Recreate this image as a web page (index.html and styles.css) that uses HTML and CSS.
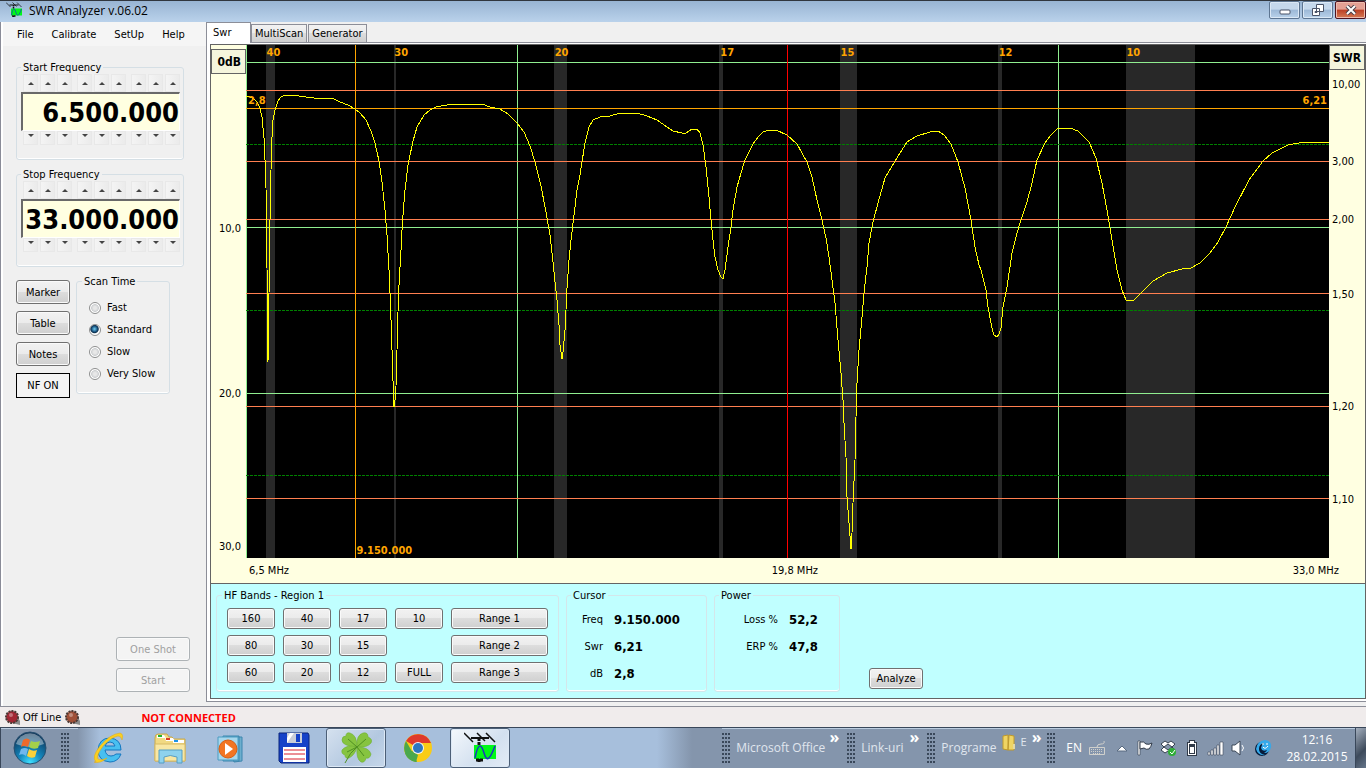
FILE: index.html
```html
<!DOCTYPE html>
<html lang="en">
<head>
    <meta charset="UTF-8">
    <meta name="viewport" content="width=device-width, initial-scale=1.0">
    <title>SWR Analyzer v.06.02</title>
    <link rel="stylesheet" href="styles.css">
</head>
<body>
    <svg class="defs" width="0" height="0" aria-hidden="true">
        <symbol id="antenna" viewBox="0 0 32 32">
            <path d="M10 13h22v14H10z" fill="#00f818"/>
            <path d="M11 26c3-15 6-15 9-5s6 6 11-7" fill="none" stroke="#1838c0" stroke-width="1.5"/>
            <path d="M7 6h18" fill="none" stroke="#111" stroke-width="2"/>
            <path d="M0 1l9 9M13 1l8 8M22 1l9 9" fill="none" stroke="#111" stroke-width="1.5"/>
            <path d="M15 6v8M15 27v4M12 28h7" stroke="#111" stroke-width="3" stroke-dasharray="3 1"/>
        </symbol>
        <symbol id="led" viewBox="0 0 16 16">
            <path d="M11 4l4 7v4l-8-2z" fill="#8a8a8a"/>
            <circle cx="7" cy="7" r="6" fill="currentColor" stroke="#4a3a36" stroke-width="2" stroke-dasharray="2 1"/>
            <circle cx="6" cy="5" r="2" fill="#fff" opacity=".35"/>
        </symbol>
    </svg>

    <header class="titlebar">
        <svg class="title-icon" width="16" height="16"><use href="#antenna"/></svg>
        <h1 class="title">SWR Analyzer v.06.02</h1>
        <div class="window-buttons">
            <button class="win-btn" aria-label="Minimize">
                <svg width="12" height="12" viewBox="0 0 12 12"><rect x="1" y="6" width="10" height="4" rx="1" fill="#fff" stroke="#4b5468"/></svg>
            </button>
            <button class="win-btn" aria-label="Restore">
                <svg width="12" height="12" viewBox="0 0 12 12"><path d="M4.5 .5h7v7h-7zM.5 4.5h7v7h-7z" fill="#fff" stroke="#4b5468"/><path d="M3 7.5h2v1H3z" fill="#4b5468" stroke="#4b5468"/></svg>
            </button>
            <button class="win-btn close" aria-label="Close">
                <svg width="12" height="10" viewBox="0 0 12 10"><path d="M2 1l8 8M10 1L2 9" stroke="#4b4048" stroke-width="4"/><path d="M2 1l8 8M10 1L2 9" stroke="#fff" stroke-width="2"/></svg>
            </button>
        </div>
    </header>

    <div class="window">
        <aside class="sidebar">
            <nav class="menu">
                <button class="menu-item">File</button>
                <button class="menu-item">Calibrate</button>
                <button class="menu-item">SetUp</button>
                <button class="menu-item">Help</button>
            </nav>

            <div class="controls">
                <fieldset class="group freq">
                    <legend>Start Frequency</legend>
                    <div class="spins up">
                        <div><button aria-label="Up"></button><button aria-label="Up"></button><button aria-label="Up"></button></div>
                        <div><button aria-label="Up"></button><button aria-label="Up"></button><button aria-label="Up"></button></div>
                        <div><button aria-label="Up"></button><button aria-label="Up"></button><button aria-label="Up"></button></div>
                    </div>
                    <input class="freq-value" type="text" value="6.500.000" aria-label="Start Frequency">
                    <div class="spins down">
                        <div><button aria-label="Down"></button><button aria-label="Down"></button><button aria-label="Down"></button></div>
                        <div><button aria-label="Down"></button><button aria-label="Down"></button><button aria-label="Down"></button></div>
                        <div><button aria-label="Down"></button><button aria-label="Down"></button><button aria-label="Down"></button></div>
                    </div>
                </fieldset>

                <fieldset class="group freq">
                    <legend>Stop Frequency</legend>
                    <div class="spins up">
                        <div><button aria-label="Up"></button><button aria-label="Up"></button><button aria-label="Up"></button></div>
                        <div><button aria-label="Up"></button><button aria-label="Up"></button><button aria-label="Up"></button></div>
                        <div><button aria-label="Up"></button><button aria-label="Up"></button><button aria-label="Up"></button></div>
                    </div>
                    <input class="freq-value" type="text" value="33.000.000" aria-label="Stop Frequency">
                    <div class="spins down">
                        <div><button aria-label="Down"></button><button aria-label="Down"></button><button aria-label="Down"></button></div>
                        <div><button aria-label="Down"></button><button aria-label="Down"></button><button aria-label="Down"></button></div>
                        <div><button aria-label="Down"></button><button aria-label="Down"></button><button aria-label="Down"></button></div>
                    </div>
                </fieldset>

                <div class="tools">
                    <div class="tool-buttons">
                        <button class="btn">Marker</button>
                        <button class="btn">Table</button>
                        <button class="btn">Notes</button>
                        <button class="nf">NF ON</button>
                    </div>
                    <fieldset class="group scan">
                        <legend>Scan Time</legend>
                        <label><input type="radio" name="scan">Fast</label>
                        <label><input type="radio" name="scan" checked>Standard</label>
                        <label><input type="radio" name="scan">Slow</label>
                        <label><input type="radio" name="scan">Very Slow</label>
                    </fieldset>
                </div>

                <div class="run">
                    <button class="btn" disabled>One Shot</button>
                    <button class="btn" disabled>Start</button>
                </div>
            </div>
        </aside>

        <main class="workspace">
            <div class="tabs" role="tablist">
                <button class="tab active" role="tab" aria-selected="true">Swr</button>
                <button class="tab" role="tab">MultiScan</button>
                <button class="tab" role="tab">Generator</button>
            </div>

            <div class="page">
                <div class="panel">
                    <section class="chart">
                        <div class="axis axis-db">
                            <span class="axis-head">0dB</span>
                            <span class="tick" style="top: 35.7%">10,0</span>
                            <span class="tick" style="top: 67.8%">20,0</span>
                            <span class="tick" style="top: 97.7%">30,0</span>
                        </div>

                        <div class="plot">
                            <svg class="plot-svg" viewBox="246 45 1083 513" preserveAspectRatio="none" shape-rendering="crispEdges">
                                <g class="bands">
                                    <path d="M266 45h9v513h-9zM394 45h2v513h-2zM554 45h13v513h-13zM719 45h4v513h-4zM840 45h17v513h-17zM998 45h4v513h-4zM1126 45h69v513h-69z"/>
                                </g>
                                <path class="grid-db" d="M246 62.5h1083M246 227.5h1083M246 393.5h1083M246.5 45v513M517.5 45v513M1058.5 45v513"/>
                                <path class="grid-half" d="M246 144.5h1083M246 310.5h1083M246 475.5h1083"/>
                                <path class="grid-swr" d="M246 90.5h1083M246 161.5h1083M246 219.5h1083M246 293.5h1083M246 406.5h1083M246 498.5h1083"/>
                                <path class="center" d="M787.5 45v513"/>
                                <path class="cursor" d="M246 108.5h1083M355.5 45v513"/>
                                <polyline class="trace" points="246,96 250,97 254,99 257,102 260,108 262,117 264,138 265,160 266,188 267,268 268,362 269,294 270,220 271,170 272,137 273,120 275,110 278,101 281,97 285,95 297,95 299,96 306,97 314,98 334,99 340,102 348,105 355,109 360,113 366,120 371,131 375,143 379,161 382,182 385,210 387,235 388,253 389,270 390,293 391,320 392,350 393,381 394,407 395,400 396,386 397,350 398,312 399,285 401,250 402,230 403,215 405,190 408,165 413,141 417,127 424,115 430,110 436,107 447,105 472,104 482,104 490,107 500,109 508,114 517,123 524,132 530,146 535,162 541,186 546,212 550,235 553,262 555,282 557,300 559,325 560,345 562,359 563,352 565,330 566,310 567,288 569,260 571,240 574,215 577,190 580,175 582,162 585,143 589,127 593,120 600,117 610,116 613,115 621,113 637,113 647,116 657,120 667,127 673,131 682,133 686,133 692,129 697,129 700,133 703,145 706,167 709,197 711,220 713,240 715,257 718,270 721,277 723,279 725,270 728,247 731,227 733,210 737,187 741,173 745,160 753,144 758,137 763,132 769,130 776,130 787,135 797,144 802,153 807,162 812,177 817,200 822,220 826,238 829,257 832,280 835,303 838,340 841,373 843,400 844,423 846,457 847,497 849,523 851,549 852,533 853,503 855,460 856,417 857,383 859,350 862,317 864,293 867,267 869,243 873,222 878,203 885,178 895,161 907,142 917,136 930,132 938,131 944,135 951,144 958,162 965,188 971,220 975,247 979,265 981,270 986,290 988,307 992,328 994,335 997,337 999,334 1001,328 1003,307 1007,287 1012,253 1017,233 1021,220 1027,202 1032,183 1037,160 1045,143 1051,135 1058,128 1070,128 1078,131 1089,142 1096,158 1102,183 1107,210 1112,240 1117,270 1122,290 1126,300 1130,301 1134,300 1142,292 1153,281 1167,273 1182,269 1191,268 1200,263 1210,253 1218,242 1226,227 1235,207 1249,180 1263,161 1272,153 1282,148 1288,145 1299,143 1301,142 1303,143 1317,142 1329,142"/>
                            </svg>
                            <span class="band" style="left: 1.9%">40</span>
                            <span class="band" style="left: 13.7%">30</span>
                            <span class="band" style="left: 28.5%">20</span>
                            <span class="band" style="left: 43.8%">17</span>
                            <span class="band" style="left: 54.9%">15</span>
                            <span class="band" style="left: 69.5%">12</span>
                            <span class="band" style="left: 81.3%">10</span>
                            <span class="mark mark-db">2,8</span>
                            <span class="mark mark-swr">6,21</span>
                            <span class="mark mark-freq">9.150.000</span>
                        </div>

                        <div class="axis axis-swr">
                            <span class="axis-head">SWR</span>
                            <span class="tick" style="top: 7.6%">10,00</span>
                            <span class="tick" style="top: 22.7%">3,00</span>
                            <span class="tick" style="top: 34%">2,00</span>
                            <span class="tick" style="top: 48.6%">1,50</span>
                            <span class="tick" style="top: 70.4%">1,20</span>
                            <span class="tick" style="top: 88.5%">1,10</span>
                        </div>

                        <div class="axis-mhz">
                            <span>6,5 MHz</span>
                            <span class="mid">19,8 MHz</span>
                            <span>33,0 MHz</span>
                        </div>
                    </section>

                    <section class="readout">
                        <fieldset class="group bands-box">
                            <legend>HF Bands - Region 1</legend>
                            <div class="band-grid">
                                <button class="btn">160</button>
                                <button class="btn">40</button>
                                <button class="btn">17</button>
                                <button class="btn">10</button>
                                <button class="btn">Range 1</button>
                                <button class="btn">80</button>
                                <button class="btn">30</button>
                                <button class="btn">15</button>
                                <button class="btn range">Range 2</button>
                                <button class="btn">60</button>
                                <button class="btn">20</button>
                                <button class="btn">12</button>
                                <button class="btn">FULL</button>
                                <button class="btn">Range 3</button>
                            </div>
                        </fieldset>

                        <fieldset class="group cursor-box">
                            <legend>Cursor</legend>
                            <dl class="values">
                                <dt>Freq</dt><dd>9.150.000</dd>
                                <dt>Swr</dt><dd>6,21</dd>
                                <dt>dB</dt><dd>2,8</dd>
                            </dl>
                        </fieldset>

                        <fieldset class="group power-box">
                            <legend>Power</legend>
                            <dl class="values">
                                <dt>Loss %</dt><dd>52,2</dd>
                                <dt>ERP %</dt><dd>47,8</dd>
                            </dl>
                        </fieldset>

                        <button class="btn analyze">Analyze</button>
                    </section>
                </div>
            </div>
        </main>
    </div>

    <div class="statusbar">
        <svg class="led red" width="16" height="16"><use href="#led"/></svg>
        <span>Off Line</span>
        <svg class="led brown" width="16" height="16"><use href="#led"/></svg>
        <strong class="not-connected">NOT CONNECTED</strong>
    </div>

    <footer class="taskbar">
        <div class="start-area">
            <button class="orb" aria-label="Start menu">
                <svg width="34" height="34" viewBox="0 0 34 34">
                    <defs>
                        <radialGradient id="orbFill" cx=".5" cy=".95" r=".9"><stop offset="0" stop-color="#3fe0ff"/><stop offset=".4" stop-color="#1487bd"/><stop offset="1" stop-color="#0d3457"/></radialGradient>
                    </defs>
                    <circle cx="17" cy="17" r="16" fill="url(#orbFill)" stroke="#274f70"/>
                    <path d="M3 13a14.5 14.5 0 0 1 28 0q-14 6-28 0z" fill="#fff" opacity=".4"/>
                    <path d="M10 9q4-3 7 0l-2 7q-4-2-7 0z" fill="#ee6a2c"/>
                    <path d="M18 10q4 2 9 0l-2 7q-5 2-9-1z" fill="#a4d04a"/>
                    <path d="M8 18q4-2 7 0l-2 7q-3-3-7-1z" fill="#6fb7ee"/>
                    <path d="M16 18q4 3 8 1l-2 7q-4 2-8-1z" fill="#fbd13b"/>
                </svg>
            </button>
            <span class="grip"></span>
        </div>

        <div class="apps">
            <button class="app" aria-label="Internet Explorer">
                <svg width="32" height="32" viewBox="0 0 32 32">
                    <path d="M29 18H13q1 6 6 6 3 0 5-2h5q-3 8-11 8Q6 29 6 18 7 6 18 6q11 1 11 12zM13 14h10q-1-4-5-4t-5 4z" fill="#48bff0" stroke="#1477c0"/>
                    <path d="M4 30q-5-5 4-16Q18 2 28 1q4 1 2 7-1-4-4-4-6 1-14 9-8 10-6 14 3 2 9-1-7 6-13 4z" fill="#f9cf20" stroke="#e0a812" stroke-width=".5"/>
                </svg>
            </button>
            <button class="app" aria-label="Explorer">
                <svg width="32" height="32" viewBox="0 0 32 32">
                    <path d="M1 29V6q0-4 3-4h9l2 3h3l2 2h11v22z" fill="#f1d982" stroke="#c8a84c"/>
                    <path d="M3 3h7l2 3H3zM11 6h8l2 3h-9zM19 8h11v3H19z" fill="#fff"/>
                    <path d="M4 3h4v2H4z" fill="#22b531"/><path d="M12 6h4v2h-4z" fill="#dc3a28"/><path d="M20 8h4v2h-4z" fill="#1e94e6"/>
                    <path d="M1 12h30v17H1z" fill="#f8e7a4" stroke="#d7ba64"/>
                    <path d="M5 31V18h23v13h-5v-6q-7-3-13 0v6z" fill="#8ed2ed" stroke="#559ec4"/>
                </svg>
            </button>
            <button class="app" aria-label="Media Player">
                <svg width="32" height="32" viewBox="0 0 32 32">
                    <path d="M10 5h16v24l-8 1zM7 4h16v25H7z" fill="#6daecd" stroke="#3d86ae"/>
                    <path d="M2 5h20v23H2z" fill="#a7d7ec" stroke="#4b9cc2"/>
                    <circle cx="12" cy="17" r="9" fill="#f27522" stroke="#d85e12"/>
                    <path d="M9 11l8 6-8 6z" fill="#fff"/>
                </svg>
            </button>
            <button class="app" aria-label="Total Commander">
                <svg width="32" height="32" viewBox="0 0 32 32">
                    <path d="M1 1h29l1 2v28H3l-2-2z" fill="#1642c8" stroke="#0a257b"/>
                    <path d="M9 1h15v10H9z" fill="#c9ced8"/><path d="M9 11L16 1h-4l-3 5z" fill="#fff"/><path d="M18 2h4v8h-4z" fill="#1642c8"/>
                    <path d="M5 15h23v15H5z" fill="#fff"/>
                    <path d="M6 18h21M6 22h21M6 27h21" stroke="#d81e2c"/>
                </svg>
            </button>
            <button class="app running" aria-label="Clover">
                <svg width="32" height="32" viewBox="0 0 32 32">
                    <g fill="#86c440" stroke="#6fb032" stroke-width=".6">
                        <path d="M17 15Q2 14 2 8q0-4 4-4 0-4 4-3 7 2 7 14z"/>
                        <path d="M17 15Q16 3 23 1q5-1 5 4 5 2 3 6-4 5-14 4z"/>
                        <path d="M17 15q12 0 14 7-1 5-5 4-1 5-5 4-5-3-4-15z"/>
                        <path d="M17 15Q7 12 2 18q-1 4 3 5 0 4 4 3 6-3 8-11z"/>
                    </g>
                    <path d="M17 15Q10 20 5 31M17 15L8 7M17 15l9-8M17 15l7 9M17 15l-10 5" fill="none" stroke="#4f8f22"/>
                </svg>
            </button>
            <button class="app" aria-label="Chrome">
                <svg width="30" height="30" viewBox="0 0 30 30">
                    <circle cx="15" cy="15" r="14" fill="#f9cc16"/>
                    <path d="M15 15L3 8a14 14 0 0 1 25 2H15z" fill="#df3a2c"/>
                    <path d="M3 8l8 14 3 7A14 14 0 0 1 3 8z" fill="#4aa84c"/>
                    <path d="M9 18l6 4-2 7q-8-1-11-9z" fill="#4aa84c"/>
                    <circle cx="15" cy="15" r="6" fill="#eef4fa"/><circle cx="15" cy="15" r="5" fill="#2d77c0"/>
                </svg>
            </button>
            <button class="app running current" aria-label="SWR Analyzer">
                <svg width="32" height="32"><use href="#antenna"/></svg>
            </button>
        </div>

        <div class="toolbars">
            <span class="grip"></span>
            <div class="toolbar office"><a href="#">Microsoft Office</a><span class="more">»</span></div>
            <span class="grip"></span>
            <div class="toolbar links"><a href="#">Link-uri</a><span class="more">»</span></div>
            <span class="grip"></span>
            <div class="toolbar programs">
                <a href="#">Programe</a>
                <svg class="folder" width="14" height="18" viewBox="0 0 14 18"><path d="M1 2l5-1v15l-5-1zM7 1l5 1v14H6z" fill="#efd464" stroke="#c09a2c"/><path d="M11 10h2v5h-2z" fill="#e5d8a0"/></svg>
                <span class="item">E</span>
                <span class="more">»</span>
            </div>
            <span class="grip"></span>
        </div>

        <div class="tray">
            <span class="lang">EN</span>
            <svg class="kbd" width="16" height="16" viewBox="0 0 16 16"><path d="M.5 7.5h15v7H.5zM8 7q0-3 4-3t3-3" fill="none" stroke="#d0d0cc"/><path d="M2 9.5h12M2 11.5h12M4 13.5h8" stroke="#d0d0cc" stroke-dasharray="1 1"/></svg>
            <svg width="16" height="16" viewBox="0 0 16 16"><path d="M3 11l5-5 5 5z" fill="#fff" stroke="#596a80"/></svg>
            <svg width="16" height="16" viewBox="0 0 16 16"><path d="M1 1h2v14H1z" fill="#fff" stroke="#303a48" stroke-width=".6"/><path d="M3 2q4-1 6 2 3 1 6-1-1 4-3 6-3 1-5-1l-4 1z" fill="#fff" stroke="#303a48"/></svg>
            <svg width="17" height="17" viewBox="0 0 17 17"><path d="M5 1l3 2 3-2 4 3-3 3 3 3-4 3-3-2-3 2-4-3 3-3-3-3zM4 7l4 3 4-3-4-3z" fill="#fff" stroke="#384250"/><circle cx="12" cy="12" r="4" fill="#2eae35"/><path d="M10 12l2 2 3-4" fill="none" stroke="#fff"/></svg>
            <svg width="16" height="16" viewBox="0 0 16 16"><path d="M5 0h6v2h2v14H3V2h2z" fill="#303a48"/><path d="M6 1h4v2h2v12H4V3h2z" fill="#fff"/><path d="M5 4h6v10H5z" fill="#303a48"/><path d="M6 7h4v6H6z" fill="#fff"/></svg>
            <svg width="17" height="16" viewBox="0 0 17 16"><path d="M1 12h2v3H1zM4 10h2v5H4zM7 8h2v7H7zM10 5h2v10h-2zM13 2h3v13h-3z" fill="#fff" stroke="#3c4858" stroke-width=".6"/></svg>
            <svg width="16" height="16" viewBox="0 0 16 16"><path d="M1 5h3l5-4v14l-5-4H1z" fill="#fff" stroke="#3b4757"/><path d="M11 5q3 3 0 6" fill="none" stroke="#fff"/></svg>
            <svg width="18" height="18" viewBox="0 0 18 18"><circle cx="8" cy="10" r="7" fill="#061b39"/><path d="M2 10Q3 2 11 1q7 1 6 7-1 6-7 6 3-2 3-3-5 2-6-2 0-3 3-5-5 1-5 6 0 5 6 6-7 1-9-6z" fill="#35a9ea"/><path d="M9 8q2 3 5-1M9 4v2M13 4v2" fill="none" stroke="#fff"/></svg>
            <div class="clock"><time>12:16</time><time>28.02.2015</time></div>
        </div>
        <button class="show-desktop" aria-label="Show desktop"></button>
    </footer>
</body>
</html>
```

FILE: styles.css
```css
* {
    box-sizing: border-box;
}

body {
    display: flex;
    flex-direction: column;
    height: 100vh;
    margin: 0;
    overflow: hidden;
    background: #f0f0f0;
    color: #000;
    font-family: 'DejaVu Sans Condensed', 'DejaVu Sans', Tahoma, sans-serif;
    font-size: 11px;
    line-height: 14px;
}

button, input {
    font: inherit;
    color: inherit;
    margin: 0;
    padding: 0;
}

.defs {
    position: absolute;
}

/* title bar */
.titlebar {
    display: flex;
    flex: none;
    height: 22px;
    padding-left: 6px;
    background: linear-gradient(#98b4d3, #bad2eb);
    border-top: 1px solid #30363e;
}

.title-icon {
    margin-top: 1px;
}

.title {
    flex: 1;
    margin: 0 0 0 7px;
    font-family: 'Open Sans', 'Noto Sans', sans-serif;
    font-size: 12px;
    font-weight: normal;
    line-height: 19px;
}

.window-buttons {
    display: flex;
    gap: 2px;
}

.win-btn {
    display: flex;
    align-items: center;
    justify-content: center;
    width: 31px;
    height: 18px;
    border: 1px solid #5d7591;
    border-radius: 2px;
    background: linear-gradient(#c5d8ec 45%, #9cb8d6 50%, #b9d2ea);
    box-shadow: inset 0 0 0 1px #dbe8f5;
}

.win-btn.close {
    border-color: #4e1420;
    background: linear-gradient(#e4a093 45%, #bd4025 50%, #d47a54);
    box-shadow: inset 0 0 0 1px #eebbae;
}

/* window */
.window {
    display: flex;
    flex: 1;
    min-height: 0;
    border-left: 1px solid #8a8c98;
}

.sidebar {
    display: flex;
    flex-direction: column;
    width: 205px;
    padding-left: 2px;
    background: linear-gradient(to right, #fff 2px, #f0f0f0 2px);
}

.menu {
    display: flex;
    gap: 18px;
    height: 24px;
    padding: 1px 0 0 14px;
    background: #f5f5f5;
}

.menu-item {
    border: 0;
    background: none;
}

.controls {
    display: flex;
    flex: 1;
    flex-direction: column;
    gap: 7px;
    padding: 14px 16px 14px 13px;
}

.group {
    min-width: 0;
    margin: 0;
    padding: 0;
    border: 1px solid #d5dfe5;
    border-radius: 3px;
    box-shadow: inset 0 -1px #fff;
}

.group legend {
    margin-left: 4px;
    padding: 1px 2px 0;
    height: 14px;
}

.freq {
    width: 168px;
    height: 100px;
    padding: 0 3px 0 4px;
}

.freq legend {
    margin-left: 0;
}

.spins {
    display: flex;
    gap: 5px;
    padding: 0 2px;
}

.spins div {
    display: flex;
    gap: 2px;
}

.spins button {
    display: flex;
    align-items: center;
    justify-content: center;
    width: 15px;
    height: 14px;
    border: 1px solid #e8e8e8;
    background: linear-gradient(to right, #f4f4f4, #ebebeb);
}

.spins.up button {
    height: 18px;
}

.spins button::before {
    content: '';
    border: 3px solid transparent;
    border-bottom-color: #444;
    border-top: 0;
}

.spins.down button::before {
    border-top: 3px solid #444;
    border-bottom: 0;
}

.spins.down button {
    align-items: flex-start;
    padding-top: 2px;
}

.freq-value {
    display: block;
    width: 100%;
    height: 39px;
    border: 1px solid #fff;
    border-top: 2px solid #696969;
    border-left: 2px solid #696969;
    background: #ffffe1;
    font-size: 27px;
    font-weight: bold;
    text-align: right;
}

.tools {
    display: flex;
    align-items: flex-start;
    gap: 6px;
}

.tool-buttons {
    display: flex;
    flex-direction: column;
    gap: 7px;
    width: 54px;
    padding-top: 6px;
}

.btn {
    height: 24px;
    padding-top: 1px;
    border: 1px solid #707070;
    border-radius: 3px;
    background: linear-gradient(#f2f2f2, #ebebeb 48%, #dddddd 50%, #cfcfcf);
    box-shadow: inset 0 0 0 1px #fafafa;
}

.btn:disabled {
    border-color: #adb2b5;
    background: #f4f4f4;
    color: #a0a0a0;
}

.nf {
    height: 25px;
    border: 1px solid #000;
    background: #f4f4f4;
}

.scan {
    display: flex;
    flex-direction: column;
    width: 94px;
    height: 120px;
    padding: 9px 0 0 12px;
}

.scan legend {
    margin-left: -7px;
}

.scan label {
    display: flex;
    align-items: center;
    gap: 6px;
    height: 22px;
}

.scan input {
    appearance: none;
    width: 12px;
    height: 12px;
    border: 1px solid #8e8f8f;
    border-radius: 50%;
    background: radial-gradient(#e8e8e8 20%, #cfd1d3 50%, #fff 60%);
}

.scan input:checked {
    background: radial-gradient(circle at 45% 40%, #72d0f4, #17517e 35%, #0d2f4c 46%, #fff 58%);
}

.run {
    display: flex;
    flex-direction: column;
    align-self: flex-end;
    gap: 7px;
    width: 74px;
    margin-top: auto;
}

/* tabs */
.workspace {
    display: flex;
    flex: 1;
    flex-direction: column;
    min-width: 0;
    padding-bottom: 4px;
}

.tabs {
    display: flex;
    align-items: flex-end;
    height: 21px;
    border-bottom: 1px solid #8c8e98;
}

.tab {
    height: 18px;
    margin-right: 1px;
    padding: 1px 3px 0;
    border: 1px solid #8c8e98;
    border-bottom: 0;
    background: linear-gradient(#f2f2f2, #ebebeb 48%, #dddddd 50%, #cfcfcf);
}

.tab.active {
    width: 45px;
    height: 21px;
    margin: 0 0 -1px;
    padding: 0 0 1px 6px;
    background: #fff;
    text-align: left;
}

.page {
    display: flex;
    flex: 1;
    min-height: 0;
    padding: 1px 0 2px 3px;
    border-left: 1px solid #8c8e98;
    border-bottom: 1px solid #8c8e98;
    background: #fff;
}

.panel {
    display: flex;
    flex: 1;
    flex-direction: column;
    min-width: 0;
    border: 1px solid #646464;
}

/* chart */
.chart {
    display: grid;
    flex: 1;
    grid-template: 1fr 25px / 35px 1fr 36px;
    min-height: 0;
    background: #ffffe1;
    border-bottom: 1px solid #646464;
}

.axis, .plot {
    position: relative;
}

.plot {
    background: #000;
    overflow: hidden;
    color: #ffa500;
    font-weight: bold;
}

.plot-svg {
    display: block;
    width: 100%;
    height: 100%;
}

.plot-svg path, .plot-svg polyline {
    fill: none;
    vector-effect: non-scaling-stroke;
}

.plot-svg .bands path {
    fill: #282828;
}

.grid-db {
    stroke: #90ee90;
}

.grid-half {
    stroke: #008000;
    stroke-dasharray: 3 1;
}

.grid-swr {
    stroke: #ff7f50;
}

.center {
    stroke: #ff0000;
}

.cursor {
    stroke: #ffa500;
}

.trace {
    stroke: #ffff00;
}

.band {
    position: absolute;
    top: 1px;
}

.mark {
    position: absolute;
}

.mark-db {
    top: 49px;
    left: 2px;
}

.mark-swr {
    top: 49px;
    right: 2px;
}

.mark-freq {
    bottom: 0;
    left: 10.2%;
}

.axis-head {
    display: block;
    height: 25px;
    padding-top: 1px;
    border: 1px solid #646464;
    background: #f5f5dc;
    font-size: 12px;
    font-weight: bold;
    line-height: 23px;
    text-align: center;
}

.axis-db .axis-head {
    margin-top: 4px;
    padding-right: 4px;
    text-align: right;
}

.tick {
    position: absolute;
    padding-top: 1px;
    transform: translateY(-50%);
}

.axis-db .tick {
    right: 5px;
}

.axis-swr .tick {
    left: 3px;
}

.axis-mhz {
    display: flex;
    grid-column: 1 / -1;
    align-items: center;
    justify-content: space-between;
    padding: 0 26px 0 38px;
}

.mid {
    margin-left: 8px;
}

/* bottom panel */
.readout {
    display: flex;
    flex: none;
    gap: 7px;
    height: 114px;
    padding: 4px 5px 6px;
    background: #c0ffff;
}

.readout .group {
    border-color: #d4e6ea;
}

.readout .btn {
    height: 21px;
}

.bands-box {
    width: 343px;
    padding: 6px 10px 0;
}

.bands-box legend {
    margin-left: -5px;
}

.band-grid {
    display: grid;
    grid-template-columns: repeat(4, 48px) 1fr;
    gap: 6px 8px;
}

.range {
    grid-column: 5;
}

.cursor-box {
    width: 141px;
}

.power-box {
    width: 126px;
}

.values {
    display: grid;
    grid-template-columns: 36px 1fr;
    grid-auto-rows: 27px;
    column-gap: 11px;
    align-items: center;
    margin: 4px 0 0;
}

.power-box .values {
    grid-template-columns: 63px 1fr;
}

.values dt {
    text-align: right;
}

.values dd {
    margin: 0;
    font-size: 13px;
    font-weight: bold;
}

.analyze {
    align-self: flex-end;
    width: 54px;
    margin: 0 0 3px 22px;
}

/* status bar */
.statusbar {
    display: flex;
    flex: none;
    align-items: center;
    height: 21px;
    padding: 2px 0 0 5px;
    border-top: 1px solid #8c8e98;
    background: #f0ecec;
}

.led {
    margin-right: 2px;
}

.led.red {
    color: #a32734;
}

.led.brown {
    margin-left: 4px;
    color: #a05038;
}

.not-connected {
    margin-left: 58px;
    color: #f00;
    font-family: 'Open Sans', 'Noto Sans', sans-serif;
}

/* taskbar */
.taskbar {
    display: flex;
    flex: none;
    height: 41px;
    border-top: 1px solid #39475a;
    box-shadow: inset 0 1px #bccde0;
    background: #8495ac;
    color: #fff;
    font-family: 'Open Sans', 'Noto Sans', sans-serif;
    font-size: 12px;
}

.taskbar button {
    border: 0;
    background: none;
}

.taskbar svg {
    flex: none;
}

.start-area {
    display: flex;
    align-items: center;
    gap: 14px;
    width: 78px;
    padding-left: 12px;
    border-left: 1px solid #39475a;
}

.orb svg {
    display: block;
}

.grip {
    flex: none;
    width: 9px;
    height: 31px;
    background: radial-gradient(circle at 1px 1px, #3a485a 1px, transparent 1px) 0 0 / 3px 4px;
}

.apps {
    display: flex;
    flex: 1;
    gap: 2px;
    background: linear-gradient(to right, #8495ac, #a7bfdc 22px, #a7bfdc calc(100% - 65px), #8495ac calc(100% - 30px));
}

.taskbar .app {
    display: flex;
    align-items: center;
    justify-content: center;
    width: 60px;
}

.taskbar .running {
    border: 1px solid #4c5f77;
    border-radius: 3px;
    background: linear-gradient(135deg, #d5e1ef, #b3c8e0 60%, #c6d7ea);
    box-shadow: inset 0 0 0 1px #dce8f5;
}

.taskbar .current {
    background: linear-gradient(135deg, #f4f8fc, #d3e0ef 60%, #e3ecf6);
}

.toolbars {
    display: flex;
    align-items: center;
    width: 336px;
    color: #e0e6ee;
}

.toolbar {
    display: flex;
    flex: none;
    align-items: center;
    height: 100%;
    padding-left: 5px;
}

.toolbar a {
    color: inherit;
    text-decoration: none;
}

.more {
    align-self: flex-start;
    margin-left: auto;
    padding: 2px 8px 0 0;
    color: #fff;
    font-size: 16px;
    font-weight: bold;
    line-height: 14px;
}

.office {
    width: 116px;
}

.links {
    width: 71px;
}

.programs {
    gap: 5px;
    width: 111px;
}

.folder {
    align-self: flex-start;
    margin-top: 6px;
}

.item {
    align-self: flex-start;
    padding-top: 7px;
    font-size: 11px;
}

.tray {
    display: flex;
    align-items: center;
    gap: 7px;
    padding-left: 8px;
}

.kbd {
    margin-right: 2px;
}

.clock {
    display: flex;
    flex-direction: column;
    align-items: center;
    width: 76px;
    line-height: 17px;
}

.taskbar .show-desktop {
    width: 11px;
    border-left: 1px solid #39475a;
    background: linear-gradient(135deg, #a5b0bf, #3d4a5b 60%, #65758a);
}
```
